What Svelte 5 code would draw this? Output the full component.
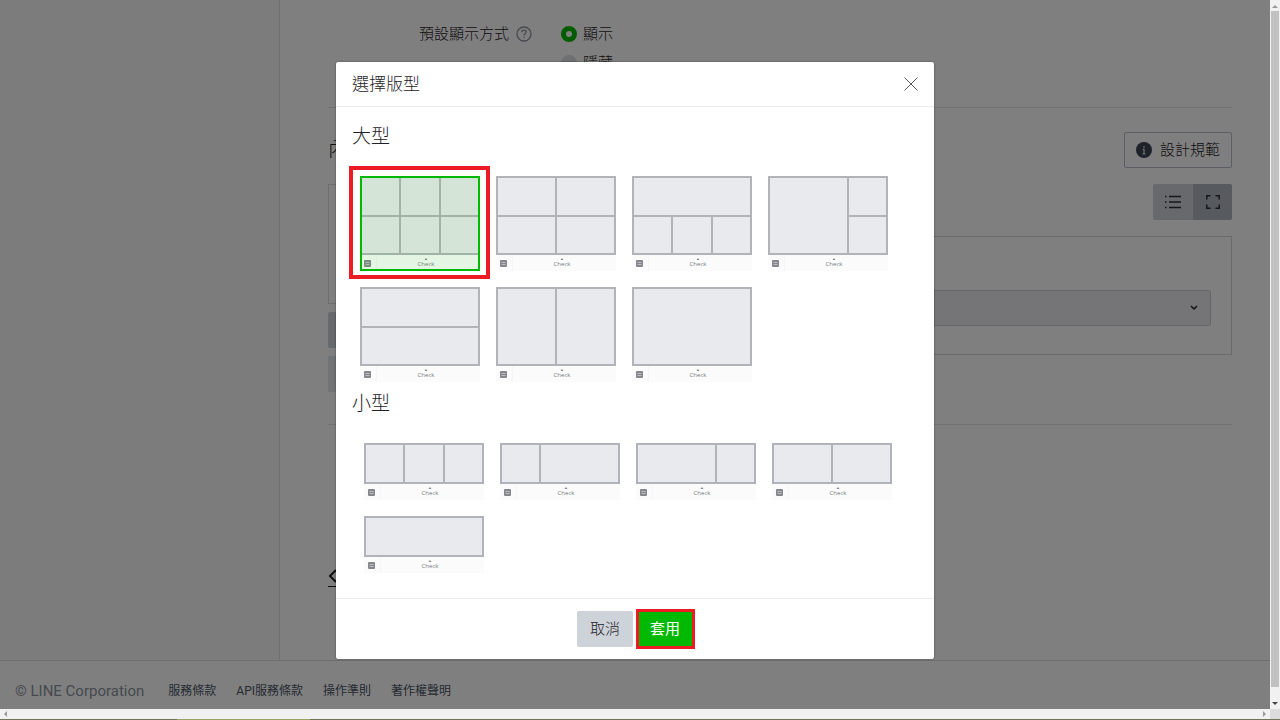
<script lang="ts">
interface Layout {
	id: string;
	label: string;
	lines: string;
}

// Divider paths are drawn on a 120px wide preview
const largeLayouts: Layout[] = [
	{ id: 'l6', label: '六格', lines: 'M40 1V78M80 1V78M1 40H119' },
	{ id: 'l4', label: '四格', lines: 'M60 1V78M1 40H119' },
	{ id: 'l1-3', label: '上一下三', lines: 'M1 40H119M40 40V78M80 40V78' },
	{ id: 'l1-2', label: '左一右二', lines: 'M80 1V78M80 40H119' },
	{ id: 'l2h', label: '上下兩格', lines: 'M1 40H119' },
	{ id: 'l2v', label: '左右兩格', lines: 'M60 1V78' },
	{ id: 'l1', label: '一格', lines: '' },
];

const smallLayouts: Layout[] = [
	{ id: 's3', label: '三格', lines: 'M40 1V40M80 1V40' },
	{ id: 's1-2', label: '左小右大', lines: 'M40 1V40' },
	{ id: 's2-1', label: '左大右小', lines: 'M80 1V40' },
	{ id: 's2', label: '兩格', lines: 'M60 1V40' },
	{ id: 's1', label: '一格', lines: '' },
];

const footerLinks = ['服務條款', 'API服務條款', '操作準則', '著作權聲明'];

let selected = $state('l6');
let display = $state('show');
</script>

{#snippet preview(layout: Layout, frame: number)}
	<label class="layout">
		<input type="radio" name="layout" value={layout.id} aria-label={layout.label} bind:group={selected}>
		<svg width="120" height={frame + 16} viewBox="0 0 120 {frame + 16}" aria-hidden="true">
			<rect y={frame} width="120" height="16" fill="#fbfbfb" />
			<path d="M16.5 {frame}v16" stroke="#f5f5f5" />
			<rect x="1" y="1" width="118" height={frame - 2} fill="#e9eaee" stroke="#b0b3b8" stroke-width="2" />
			<path d={layout.lines} fill="none" stroke="#b0b3b8" stroke-width="2" />
			<rect x="4" y={frame + 5} width="7" height="7" rx="1" fill="#85878c" />
			<path d="M5.5 {frame + 7.5}h4M5.5 {frame + 9.5}h4" stroke="#d4d5d8" stroke-width="0.7" />
			<path d="M64.5 {frame + 5}l1.5-2 1.5 2z" fill="#888" />
			<text x="66" y={frame + 11} text-anchor="middle">Check</text>
		</svg>
	</label>
{/snippet}

<div class="window">
	<div class="viewport">
		<div class="page">
			<div class="columns">
				<aside></aside>
				<main>
					<section class="display">
						<div class="field-name">
							<span>預設顯示方式</span>
							<svg width="16" height="16" viewBox="0 0 16 16" fill="none" stroke="#8d939c" stroke-width="1.3">
								<circle cx="8" cy="8" r="7" />
								<path d="M5.8 6.3c0-3 4.4-2.8 4.4-.2 0 1.6-2.2 1.7-2.2 3.4M8 10.7v1.4" />
							</svg>
						</div>
						<div class="options">
							<label><input type="radio" name="display" value="show" bind:group={display}>顯示</label>
							<label><input type="radio" name="display" value="hide" bind:group={display}>隱藏</label>
						</div>
					</section>

					<section class="content">
						<div class="content-head">
							<h1>內</h1>
							<button class="guide" type="button">
								<svg width="16" height="16" viewBox="0 0 16 16">
									<circle cx="8" cy="8" r="8" fill="#3c4552" />
									<path d="M8 4v1.7M6.7 7.3H8V12M6.5 12h3" fill="none" stroke="#e4e6e8" stroke-width="1.2" />
								</svg>
								設計規範
							</button>
						</div>
						<div class="editor">
							<div class="menu-image">
								<div class="image-box"></div>
								<button type="button" aria-label="選擇版型"></button>
								<button type="button" class="faint" aria-label="建立圖片"></button>
							</div>
							<div class="actions">
								<div class="toggle">
									<button type="button" aria-label="清單">
										<svg width="16" height="14" viewBox="0 0 16 14" stroke="#2b2e34" stroke-width="1.4">
											<path d="M0 1.5h1.5M4 1.5h12M0 7h1.5M4 7h12M0 12.5h1.5M4 12.5h12" />
										</svg>
									</button>
									<button type="button" class="on" aria-label="展開">
										<svg width="14" height="14" viewBox="0 0 14 14" fill="none" stroke="#2b2e34" stroke-width="1.5">
											<path d="M.8 4.5V.8h3.7M9.5.8h3.7v3.7M13.2 9.5v3.7H9.5M4.5 13.2H.8V9.5" />
										</svg>
									</button>
								</div>
								<div class="panel">
									<div class="select">
										<select aria-label="類型"><option></option></select>
										<svg width="8" height="6" viewBox="0 0 8 6" fill="none" stroke="#1c1e22" stroke-width="1.5">
											<path d="M1 1l3 3 3-3" />
										</svg>
									</div>
								</div>
							</div>
						</div>
					</section>

					<a class="back" href="#list" aria-label="返回">
						<svg width="16" height="16" viewBox="0 0 16 16" fill="none" stroke="#1c1e22" stroke-width="2">
							<path d="M8 2L2 8l6 6" />
						</svg>
					</a>
				</main>
			</div>
			<footer>
				<small>© LINE Corporation</small>
				{#each footerLinks as link}
					<a href="#terms">{link}</a>
				{/each}
			</footer>
		</div>

		<div class="backdrop">
			<div class="dialog" role="dialog" aria-modal="true" aria-labelledby="dialog-title">
				<header>
					<h2 id="dialog-title">選擇版型</h2>
					<button type="button" class="close" aria-label="關閉">
						<svg width="14" height="14" viewBox="0 0 14 14" stroke="#55585e" stroke-width="1">
							<path d="M.5.5l13 13M13.5.5l-13 13" />
						</svg>
					</button>
				</header>
				<div class="dialog-body">
					<h3>大型</h3>
					<div class="layouts large">
						{#each largeLayouts as layout (layout.id)}
							{@render preview(layout, 79)}
						{/each}
					</div>
					<h3>小型</h3>
					<div class="layouts small">
						{#each smallLayouts as layout (layout.id)}
							{@render preview(layout, 41)}
						{/each}
					</div>
				</div>
				<div class="dialog-foot">
					<button type="button" class="cancel">取消</button>
					<button type="button" class="apply">套用</button>
				</div>
			</div>
		</div>
	</div>

	<div class="bar vertical">
		<svg width="6" height="3" viewBox="0 0 6 3"><path d="M0 3l3-3 3 3z" fill="#9a9a9a" /></svg>
		<div class="thumb"></div>
		<svg width="6" height="3" viewBox="0 0 6 3"><path d="M0 0l3 3 3-3z" fill="#444" /></svg>
	</div>
	<div class="bar horizontal">
		<svg width="3" height="6" viewBox="0 0 3 6"><path d="M3 0L0 3l3 3z" fill="#9a9a9a" /></svg>
		<svg width="3" height="6" viewBox="0 0 3 6"><path d="M0 0l3 3-3 3z" fill="#9a9a9a" /></svg>
	</div>
	<div class="corner"></div>
	<div class="edge"><span></span></div>
</div>

<style>
:global(body) {
	margin: 0;
}

.window {
	display: grid;
	grid-template-columns: 1fr 10px;
	grid-template-rows: 1fr 10px 1px;
	height: 100vh;
	font-family: Roboto, "Noto Sans CJK TC", sans-serif;
	font-size: 15px;
	font-weight: 300;
	line-height: 24px;
	color: #1e2126;
}

.window * {
	box-sizing: border-box;
}

svg {
	display: block;
	flex: none;
}

h1,
h2,
h3 {
	margin: 0;
	font-weight: inherit;
}

button {
	display: flex;
	align-items: center;
	justify-content: center;
	padding: 0;
	border: 0;
	border-radius: 2px;
	font: inherit;
	color: inherit;
	cursor: pointer;
}

.viewport {
	position: relative;
	overflow: hidden;
}

.page {
	display: flex;
	flex-direction: column;
	height: 100%;
	background: #fff;
}

.columns {
	display: flex;
	flex: 1;
	min-height: 0;
}

aside {
	width: 280px;
	flex: none;
	background: #f9f9f9;
	border-right: 1px solid #dcdfe3;
}

main {
	flex: 1;
	padding: 22px 38px 0 48px;
}

.display {
	display: flex;
	height: 86px;
	padding-left: 91px;
	border-bottom: 1px solid #e2e4e8;
}

.field-name {
	display: flex;
	align-items: center;
	gap: 7px;
	width: 142px;
	height: 24px;
}

.options label {
	display: flex;
	align-items: center;
	gap: 6px;
	height: 24px;
	margin-bottom: 5px;
}

.options input {
	appearance: none;
	width: 16px;
	height: 16px;
	margin: 0;
	border: 8px solid #dfe1e5;
	border-radius: 50%;
}

.options input:checked {
	border: 5px solid #00b900;
	background: #fff;
}

.content {
	height: 317px;
	padding-top: 24px;
	border-bottom: 1px solid #e2e4e8;
}

.content-head {
	display: flex;
	align-items: center;
	justify-content: space-between;
}

h1 {
	font-size: 20px;
}

.guide {
	gap: 8px;
	height: 36px;
	padding: 0 11px;
	border: 1px solid #b7bec6;
	background: #fff;
}

.editor {
	display: flex;
	gap: 24px;
	margin-top: 16px;
}

.menu-image {
	display: flex;
	flex-direction: column;
	gap: 8px;
	width: 240px;
}

.image-box {
	height: 120px;
	border: 1px solid #dcdfe3;
}

.menu-image button {
	height: 36px;
	background: #ced3da;
}

.menu-image .faint {
	background: #e5e6e9;
}

.actions {
	flex: 1;
}

.toggle {
	display: flex;
	justify-content: flex-end;
}

.toggle button {
	width: 40px;
	height: 36px;
	border-radius: 2px 0 0 2px;
	background: #ced3da;
}

.toggle .on {
	width: 39px;
	border-radius: 0 2px 2px 0;
	background: #aeb4be;
}

.panel {
	margin-top: 16px;
	padding: 53px 20px 28px;
	border: 1px solid #d3d8dc;
}

.select {
	position: relative;
}

.select select {
	display: block;
	appearance: none;
	width: 100%;
	height: 36px;
	border: 1px solid #cbd0d4;
	border-radius: 2px;
	background: #eaebef;
}

.select svg {
	position: absolute;
	top: 15px;
	right: 13px;
	pointer-events: none;
}

.back {
	display: inline-block;
	margin-top: 143px;
	padding-bottom: 2px;
	border-bottom: 1px solid #1c1e22;
}

footer {
	display: flex;
	align-items: center;
	gap: 20px;
	height: 49px;
	padding: 12px 15px 0;
	border-top: 1px solid #dcdfe3;
	background: #fff;
}

footer small {
	margin-right: 4px;
	font-size: 15px;
	font-weight: 400;
	color: #8d939c;
}

footer a {
	font-size: 12px;
	font-weight: 400;
	color: #4b5464;
	text-decoration: none;
}

.backdrop {
	position: absolute;
	inset: 0;
	display: flex;
	align-items: flex-start;
	justify-content: center;
	padding-top: 62px;
	background: rgba(0, 0, 0, 0.5);
}

.dialog {
	width: 598px;
	border-radius: 2px;
	background: #fff;
	box-shadow: 0 0 2px rgba(0, 0, 0, 0.5);
}

header {
	display: flex;
	align-items: center;
	justify-content: space-between;
	height: 45px;
	padding: 0 16px;
	border-bottom: 1px solid #ebebeb;
}

h2 {
	font-size: 17px;
}

.close {
	background: none;
}

.dialog-body {
	padding: 16px 16px 25px;
}

h3 {
	font-size: 19px;
	line-height: 28px;
}

.layouts {
	display: grid;
	grid-template-columns: repeat(auto-fill, 120px);
	gap: 16px;
	margin-top: 25px;
}

.large {
	padding-left: 8px;
	margin-bottom: 8px;
}

.small {
	padding-left: 12px;
}

.layout {
	position: relative;
	cursor: pointer;
}

.layout input {
	position: absolute;
	appearance: none;
	inset: 0;
	margin: 0;
}

.layout text {
	font-family: "Open Sans", sans-serif;
	font-size: 6px;
	font-weight: 400;
	fill: #77797d;
}

.layout:has(input:checked)::before {
	position: absolute;
	content: "";
	inset: 0;
	border: 2px solid #00b900;
	background: rgba(0, 185, 0, 0.09);
}

.layout:has(input:checked)::after {
	position: absolute;
	content: "";
	inset: -10px -10px -8px -11px;
	border: 4px solid #ed1c24;
}

.dialog-foot {
	display: flex;
	justify-content: center;
	gap: 4px;
	padding: 12px;
	border-top: 1px solid #ebebeb;
}

.dialog-foot button {
	width: 56px;
	height: 36px;
}

.cancel {
	background: #ced3da;
}

.dialog-foot .apply {
	position: relative;
	background: #00b900;
	font-weight: 400;
	color: #fff;
}

.apply::after {
	position: absolute;
	content: "";
	inset: -2px -2px -2px -1px;
	border: 3px solid #ed1c24;
}

.bar {
	display: flex;
	align-items: center;
	justify-content: space-between;
	background: #f1f1f1;
}

.vertical {
	flex-direction: column;
	padding: 5px 0 4px;
}

.thumb {
	flex: 1;
	width: 8px;
	margin: 3px 0 15px;
	background: #c1c1c1;
}

.horizontal {
	padding: 0 4px;
}

.corner {
	background: #dcdcdc;
}

.edge {
	grid-column: 1 / -1;
	padding-left: 177px;
	background: #70745a;
}

.edge span {
	display: block;
	width: 133px;
	height: 1px;
	background: #9aa367;
}
</style>
